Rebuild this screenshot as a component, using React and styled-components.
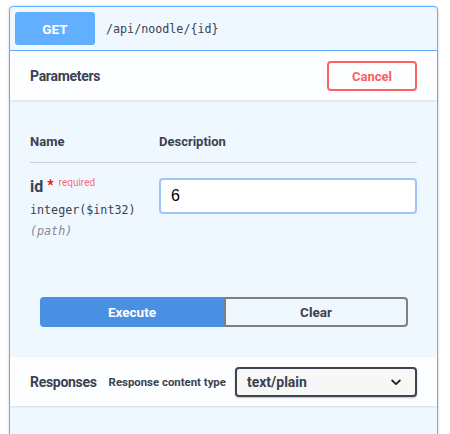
import React from 'react';
import styled, {createGlobalStyle} from 'styled-components';

const GlobalStyle = createGlobalStyle`
    html, body {
        margin: 0;
        padding: 0;
        background: #ffffff;
        overflow: hidden;
    }
    body {
        font-family: Roboto, "Liberation Sans", sans-serif;
        color: #3b4151;
    }
`;

const Page = styled.div`
    padding: 6px 12px 0 9px;
    height: 434px;
    box-sizing: border-box;
`;

const OpBlock = styled.div`
    width: 429px;
    box-sizing: border-box;
    border: 1px solid #61affe;
    border-radius: 4px;
    background: rgba(97, 175, 254, 0.1);
    box-shadow: 0 0 3px rgba(0, 0, 0, 0.19);
    padding-bottom: 40px;
`;

const Summary = styled.div`
    display: flex;
    align-items: center;
    padding: 5px;
    border-bottom: 1px solid #61affe;
`;

const Method = styled.div`
    width: 80px;
    height: 33px;
    border-radius: 3px;
    background: #61affe;
    color: #fff;
    font-weight: 700;
    font-size: 13.5px;
    display: flex;
    align-items: center;
    justify-content: center;
`;

const Path = styled.span`
    margin-left: 11px;
    font-family: "DejaVu Sans Mono", "Liberation Mono", monospace;
    font-size: 11.7px;
    color: #3b4151;
`;

const SectionHeader = styled.div`
    display: flex;
    align-items: center;
    justify-content: space-between;
    padding: 10px 20px 9px;
    background: rgba(255, 255, 255, 0.8);
    box-shadow: 0 1px 2px rgba(0, 0, 0, 0.1);
    gap: ${p => p.gap || '0'};
`;

const SectionTitle = styled.h4`
    margin: 0;
    font-size: 14px;
    letter-spacing: -0.3px;
    font-weight: 700;
    color: #3b4151;
    flex-shrink: 0;
`;

const CancelButton = styled.button`
    width: 90px;
    height: 30px;
    box-sizing: border-box;
    border: 2px solid #ff6060;
    border-radius: 4px;
    background: transparent;
    color: #ff6060;
    font-family: inherit;
    font-weight: 700;
    font-size: 13px;
    padding: 0;
`;

const ParamsBody = styled.div`
    padding: 20px 20px 0;
`;

const TableHead = styled.div`
    display: grid;
    grid-template-columns: 129px 1fr;
    padding: 14px 0 12px;
    border-bottom: 1px solid rgba(59, 65, 81, 0.2);
    font-size: 13px;
    font-weight: 700;
    line-height: 16px;
`;

const ParamRow = styled.div`
    display: grid;
    grid-template-columns: 129px 1fr;
    padding: 14px 0 0;
`;

const NameCell = styled.div`
    display: flex;
    flex-direction: column;
`;

const ParamName = styled.div`
    font-size: 16px;
    font-weight: 700;
    line-height: 20px;
    display: flex;
    align-items: flex-start;
`;

const Star = styled.span`
    color: red;
    font-size: 14px;
    margin-left: 4px;
    line-height: 16px;
`;

const Required = styled.span`
    color: rgba(255, 0, 0, 0.6);
    font-size: 10px;
    font-weight: 400;
    line-height: 12px;
    margin-left: 5px;
`;

const TypeText = styled.div`
    margin-top: 5px;
    font-family: "DejaVu Sans Mono", "Liberation Mono", monospace;
    font-size: 11.7px;
    line-height: 16px;
    color: #3b4151;
    font-style: ${p => (p.italic ? 'italic' : 'normal')};
    opacity: ${p => (p.italic ? 0.6 : 1)};
`;

const ValueInput = styled.input`
    margin-top: 1px;
    width: 100%;
    height: 36px;
    box-sizing: border-box;
    border: 2px solid #9fc3f5;
    border-radius: 4px;
    background: #fff;
    padding: 0 10px;
    font-family: "Liberation Sans", Arial, sans-serif;
    font-size: 16px;
    color: #000;
    outline: none;
`;

const ButtonRow = styled.div`
    display: grid;
    grid-template-columns: 184px 1fr;
    margin: 58px 29px 30px 30px;
`;

const ActionButton = styled.button`
    height: 30px;
    box-sizing: border-box;
    font-family: inherit;
    font-weight: 700;
    font-size: 13.5px;
    padding: 0;
    ${p =>
        p.primary
            ? `
        background: #4990e2;
        border: none;
        color: #fff;
        border-radius: 4px 0 0 4px;`
            : `
        background: transparent;
        border: 2px solid #808080;
        color: #3b4151;
        border-radius: 0 4px 4px 0;`}
`;

const ContentLabel = styled.span`
    margin-left: 3px;
    font-size: 11.4px;
    font-weight: 700;
    color: #3b4151;
    flex-shrink: 0;
`;

const SelectBox = styled.div`
    flex: 1;
    height: 30px;
    box-sizing: border-box;
    border: 2px solid #41444e;
    border-radius: 4px;
    background: #f7f7f7;
    box-shadow: 0 1px 2px rgba(0, 0, 0, 0.25);
    display: flex;
    align-items: center;
    justify-content: space-between;
    padding: 0 14px 0 10px;
    font-size: 14px;
    font-weight: 700;
    color: #3b4151;
`;

function Chevron() {
    return (
        <svg width="10" height="7" viewBox="0 0 10 7">
            <path d="M1.2 1.5 L5 5.2 L8.8 1.5" fill="none" stroke="#222" strokeWidth="1.8" strokeLinecap="round" strokeLinejoin="round" />
        </svg>
    );
}

export default function App() {
    return (
        <>
            <GlobalStyle />
            <Page>
                <OpBlock>
                    <Summary>
                        <Method>GET</Method>
                        <Path>/api/noodle/{'{id}'}</Path>
                    </Summary>
                    <SectionHeader>
                        <SectionTitle>Parameters</SectionTitle>
                        <CancelButton>Cancel</CancelButton>
                    </SectionHeader>
                    <ParamsBody>
                        <TableHead>
                            <span>Name</span>
                            <span>Description</span>
                        </TableHead>
                        <ParamRow>
                            <NameCell>
                                <ParamName>
                                    id<Star>*</Star><Required>required</Required>
                                </ParamName>
                                <TypeText>integer($int32)</TypeText>
                                <TypeText italic>(path)</TypeText>
                            </NameCell>
                            <div>
                                <ValueInput defaultValue="6" />
                            </div>
                        </ParamRow>
                    </ParamsBody>
                    <ButtonRow>
                        <ActionButton primary>Execute</ActionButton>
                        <ActionButton>Clear</ActionButton>
                    </ButtonRow>
                    <SectionHeader gap="9px">
                        <SectionTitle>Responses</SectionTitle>
                        <ContentLabel>Response content type</ContentLabel>
                        <SelectBox>
                            text/plain
                            <Chevron />
                        </SelectBox>
                    </SectionHeader>
                </OpBlock>
            </Page>
        </>
    );
}
